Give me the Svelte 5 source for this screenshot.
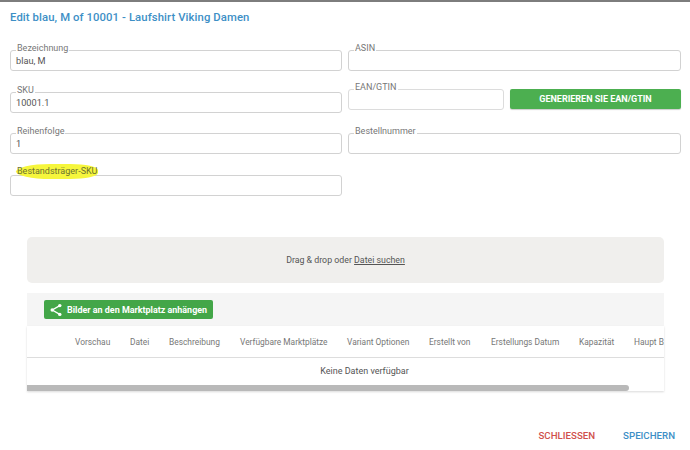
<script>
	const columns = [
		{ name: 'Vorschau', width: 55 },
		{ name: 'Datei', width: 39 },
		{ name: 'Beschreibung', width: 71 },
		{ name: 'Verfügbare Marktplätze', width: 107 },
		{ name: 'Variant Optionen', width: 82 },
		{ name: 'Erstellt von', width: 62 },
		{ name: 'Erstellungs Datum', width: 88 },
		{ name: 'Kapazität', width: 55 },
		{ name: 'Haupt Bild', width: 60 }
	];
</script>

<div class="dialog">
	<h1>Edit blau, M of 10001 - Laufshirt Viking Damen</h1>

	<div class="form">
		<div class="field">
			<span class="label">Bezeichnung</span>
			<div class="input">blau, M</div>
		</div>
		<div class="field">
			<span class="label">ASIN</span>
			<div class="input"></div>
		</div>

		<div class="field">
			<span class="label">SKU</span>
			<div class="input">10001.1</div>
		</div>
		<div class="ean-row">
			<div class="field ean">
				<span class="label">EAN/GTIN</span>
				<div class="input"></div>
			</div>
			<button class="generate">GENERIEREN SIE EAN/GTIN</button>
		</div>

		<div class="field">
			<span class="label">Reihenfolge</span>
			<div class="input">1</div>
		</div>
		<div class="field">
			<span class="label">Bestellnummer</span>
			<div class="input"></div>
		</div>

		<div class="field">
			<span class="label marked">Bestandsträger-SKU</span>
			<div class="input"></div>
		</div>
	</div>

	<div class="content">
		<div class="dropzone">
			<span>Drag &amp; drop oder <u>Datei suchen</u></span>
		</div>

		<div class="toolbar">
			<button class="attach">
				<svg width="14" height="14" viewBox="0 0 14 14" fill="none" stroke="white" stroke-width="1.3">
					<path d="M10.8 2.6 3.2 7l7.6 4.4" />
					<circle cx="10.8" cy="2.6" r="1.7" fill="white" stroke="none" />
					<circle cx="3.2" cy="7" r="1.7" fill="white" stroke="none" />
					<circle cx="10.8" cy="11.4" r="1.7" fill="white" stroke="none" />
				</svg>
				Bilder an den Marktplatz anhängen
			</button>
		</div>

		<div class="table">
			<div class="head">
				{#each columns as col}
					<span style="width: {col.width}px">{col.name}</span>
				{/each}
			</div>
			<div class="empty">Keine Daten verfügbar</div>
			<div class="scroll"><div class="thumb"></div></div>
		</div>
	</div>

	<div class="actions">
		<button class="close">SCHLIESSEN</button>
		<button class="save">SPEICHERN</button>
	</div>
</div>

<style>
	:global(body) {
		margin: 0;
		background: #fff;
	}

	.dialog {
		width: 690px;
		height: 450px;
		box-sizing: border-box;
		border-top: 2px solid #7d7d7d;
		font-family: Roboto, 'Liberation Sans', sans-serif;
		color: #555;
		overflow: hidden;
	}

	h1 {
		margin: 0;
		padding: 8.5px 10px 0;
		height: 39px;
		box-sizing: border-box;
		font-size: 11.3px;
		line-height: 14px;
		font-weight: 500;
		color: #3d8fc6;
		letter-spacing: 0.1px;
	}

	.form {
		display: grid;
		grid-template-columns: 332px 333px;
		column-gap: 6px;
		row-gap: 20.5px;
		padding: 9px 9px 0 10px;
	}

	.field {
		position: relative;
	}

	.input {
		height: 21px;
		box-sizing: border-box;
		border: 1px solid #d2d2d2;
		border-radius: 3px;
		padding: 0 5px;
		font-size: 9.2px;
		line-height: 19px;
		color: #555;
		background: #fff;
	}

	.label {
		position: absolute;
		left: 6px;
		top: -7px;
		padding: 0 1px;
		font-size: 9px;
		line-height: 11px;
		color: #777;
		background: #fff;
	}

	.marked {
		background: #f6f63c;
		color: #6d7330;
		border-radius: 50% 40% 40% 50% / 60% 50% 50% 60%;
		padding: 2px 1px;
		top: -11px;
	}

	.ean-row {
		display: flex;
		gap: 6px;
		margin-top: -2.5px;
		height: 21px;
	}

	.ean {
		width: 156px;
		flex-shrink: 0;
	}

	.ean .input {
		border-color: #dcdcdc;
	}

	.generate {
		flex: 1;
		height: 20px;
		border: none;
		border-radius: 2px;
		padding: 0;
		background: #4caf50;
		color: #fff;
		font-family: inherit;
		font-size: 9px;
		font-weight: 700;
		box-shadow: 0 1px 1px rgba(0, 0, 0, 0.2);
	}

	.content {
		width: 637px;
		margin: 41.5px 0 0 27px;
	}

	.dropzone {
		height: 46px;
		display: flex;
		align-items: center;
		justify-content: center;
		background: #f0efed;
		border-radius: 5px;
		font-size: 8.8px;
		color: #555;
	}

	.toolbar {
		margin-top: 10px;
		height: 33px;
		box-sizing: border-box;
		padding: 7px 17px 0;
		background: #f5f5f5;
	}

	.attach {
		width: 169px;
		height: 19px;
		display: flex;
		align-items: center;
		gap: 4px;
		border: none;
		border-radius: 2px;
		padding: 0 0 0 5px;
		background: #43a648;
		color: #fff;
		font-family: inherit;
		font-size: 8.95px;
		font-weight: 700;
		white-space: nowrap;
	}

	.table {
		background: #fff;
		box-shadow: 0 1px 2px rgba(0, 0, 0, 0.15);
		overflow: hidden;
	}

	.head {
		height: 32px;
		box-sizing: border-box;
		display: flex;
		align-items: center;
		padding-left: 48px;
		border-bottom: 1px solid #ddd;
		font-size: 8.4px;
		color: #777;
		white-space: nowrap;
	}

	.head span {
		flex-shrink: 0;
	}

	.empty {
		height: 27px;
		line-height: 26px;
		padding-left: 38px;
		text-align: center;
		font-size: 9px;
		color: #555;
	}

	.scroll {
		height: 6px;
	}

	.thumb {
		width: 602px;
		height: 6px;
		background: #b9b9b9;
		border-radius: 0 3px 3px 0;
	}

	.actions {
		display: flex;
		justify-content: flex-end;
		gap: 28px;
		margin-top: 39px;
		padding-right: 15px;
	}

	.actions button {
		border: none;
		padding: 0;
		background: none;
		font-family: inherit;
		font-size: 9.7px;
		font-weight: 500;
	}

	.close {
		color: #d0504c;
	}

	.save {
		color: #3d8fc6;
	}
</style>
